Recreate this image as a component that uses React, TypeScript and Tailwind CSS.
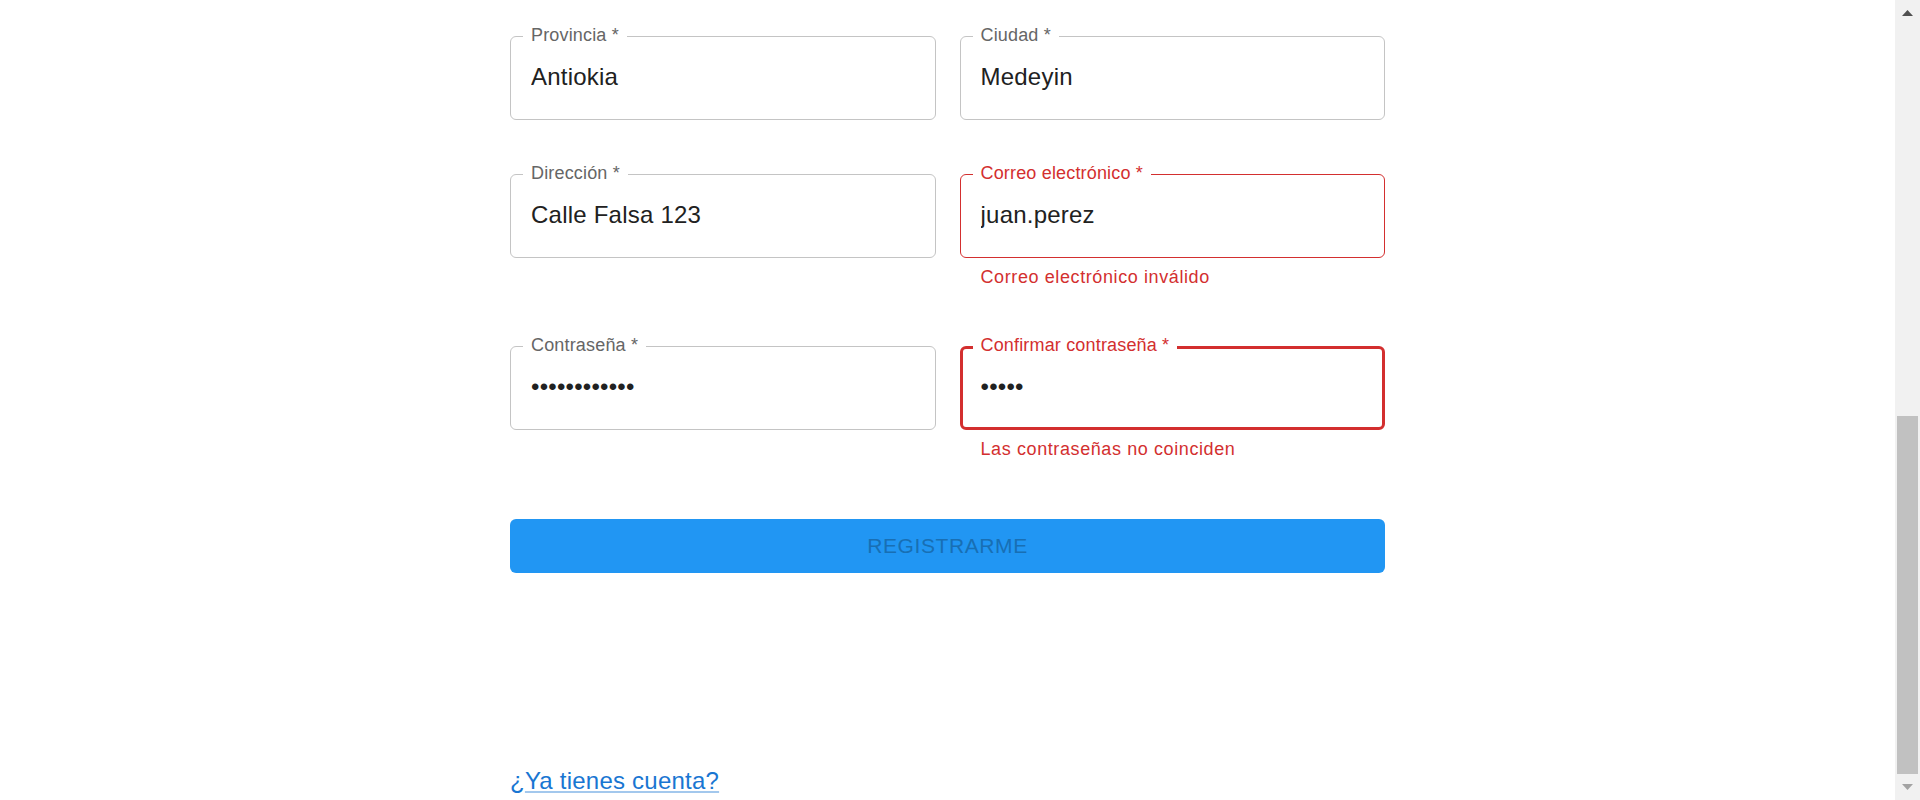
import { useState } from "react";

type FieldProps = {
  label: string;
  value: string;
  type?: string;
  error?: boolean;
  focused?: boolean;
  helper?: string;
};

function Field({ label, value, type = "text", error, focused, helper }: FieldProps) {
  const [val, setVal] = useState(value);

  const boxClass = error
    ? focused
      ? "border-[3px] border-[#d32f2f]"
      : "border border-[#d32f2f]"
    : "border border-[#c4c4c4]";

  return (
    <div className="flex flex-col">
      <div className="relative">
        <div className={`flex h-[84px] items-center rounded-[6px] ${boxClass}`}>
          <input
            type={type}
            value={val}
            onChange={(e) => setVal(e.target.value)}
            className={`h-full w-full bg-transparent pb-[2px] text-[24px] tracking-[0.00938em] text-[#212121] outline-none ${
              focused ? "pl-[18px] pr-[18px]" : "pl-[20px] pr-[20px]"
            }`}
          />
        </div>
        <label
          className={`absolute left-[13px] top-[-12px] bg-white px-[8px] text-[18px] leading-[22px] tracking-[0.00938em] ${
            error ? "text-[#d32f2f]" : "text-[#666666]"
          }`}
        >
          {label} *
        </label>
      </div>
      {helper && (
        <p className="mx-[21px] mt-[4.5px] text-[18px] leading-[1.66] tracking-[0.03333em] text-[#d32f2f]">
          {helper}
        </p>
      )}
    </div>
  );
}

function Scrollbar() {
  return (
    <div className="flex h-full w-[25px] shrink-0 flex-col items-center bg-[#f1f1f1]">
      <div className="flex h-[25px] w-full items-center justify-center">
        <svg width="11" height="6" viewBox="0 0 11 6">
          <path d="M5.5 0 L11 6 L0 6 Z" fill="#505050" />
        </svg>
      </div>
      <div className="flex-1" />
      <div className="h-[358px] w-[21px] bg-[#c1c1c1]" />
      <div className="flex h-[26px] w-full items-center justify-center">
        <svg width="11" height="6" viewBox="0 0 11 6">
          <path d="M0 0 L11 0 L5.5 6 Z" fill="#a3a3a3" />
        </svg>
      </div>
    </div>
  );
}

export default function App() {
  return (
    <div className="flex h-[800px] w-full overflow-hidden bg-white font-['Liberation_Sans',Arial,sans-serif]">
      <main className="flex h-full flex-1 justify-center overflow-hidden">
        <div className="flex w-[875px] flex-col pt-[36px]">
          <div className="grid grid-cols-2 gap-x-[24px] gap-y-[54px]">
            <Field label="Provincia" value="Antiokia" />
            <Field label="Ciudad" value="Medeyin" />
            <Field label="Dirección" value="Calle Falsa 123" />
            <Field
              label="Correo electrónico"
              value="juan.perez"
              error
              helper="Correo electrónico inválido"
            />
            <Field label="Contraseña" value="123456789012" type="password" />
            <Field
              label="Confirmar contraseña"
              value="12345"
              type="password"
              error
              focused
              helper="Las contraseñas no coinciden"
            />
          </div>

          <button
            type="button"
            className="mt-[54px] h-[54px] w-full rounded-[6px] bg-[#2196f3] text-[21px] font-medium uppercase tracking-[0.02857em] text-[#186fb4]"
          >
            Registrarme
          </button>

          <p className="mt-[190px] text-[24px] leading-[1.5] tracking-[0.00938em] text-[#1976d2]">
            <span>¿</span>
            <a
              href="#"
              className="underline decoration-[rgba(25,118,210,0.4)]"
            >
              Ya tienes cuenta?
            </a>
          </p>
        </div>
      </main>
      <Scrollbar />
    </div>
  );
}
